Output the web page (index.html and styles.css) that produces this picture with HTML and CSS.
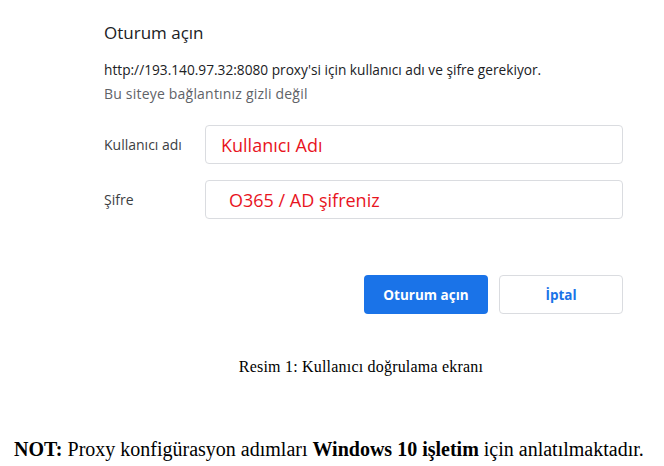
FILE: index.html
```html
<!DOCTYPE html>
<html lang="tr">

<head>
    <meta charset="UTF-8">
    <title>Oturum açın</title>
    <link rel="stylesheet" href="styles.css">
</head>

<body>
    <div class="dialog">
        <h1 class="title">Oturum açın</h1>
        <p class="msg">http://193.140.97.32:8080 proxy'si için kullanıcı adı ve şifre gerekiyor.</p>
        <p class="warn">Bu siteye bağlantınız gizli değil</p>

        <div class="row first">
            <label class="label">Kullanıcı adı</label>
            <div class="field"><span class="hint">Kullanıcı Adı</span></div>
        </div>
        <div class="row">
            <label class="label">Şifre</label>
            <div class="field"><span class="hint pass">O365 / AD şifreniz</span></div>
        </div>

        <div class="buttons">
            <a class="btn ok" href="javascript:void 0">Oturum açın</a>
            <a class="btn cancel" href="javascript:void 0">İptal</a>
        </div>
    </div>

    <p class="caption">Resim 1: Kullanıcı doğrulama ekranı</p>

    <p class="note"><b>NOT:</b> Proxy konfigürasyon adımları <b>Windows 10 işletim</b> için anlatılmaktadır.</p>
</body>

</html>
```

FILE: styles.css
```css
* {
    margin: 0;
    padding: 0;
}

body {
    background: #fff;
    font-family: "Open Sans", "Noto Sans", sans-serif;
}

.dialog {
    width: 519px;
    padding: 22px 0 0 104px;
}

.title {
    font-size: 17px;
    font-weight: normal;
    color: #202124;
    line-height: 22px;
}

.msg {
    margin-top: 17px;
    font-size: 13.7px;
    line-height: 18px;
    color: #202124;
}

.warn {
    margin-top: 6px;
    font-size: 14px;
    line-height: 18px;
    color: #5f6368;
    letter-spacing: 0.2px;
}

.row {
    display: flex;
    align-items: center;
    margin-top: 16px;
}

.row.first {
    margin-top: 22px;
}

.label {
    width: 101px;
    font-size: 14px;
    color: #3c4043;
}

.field {
    flex: 1;
    height: 37px;
    border: 1px solid #dadce0;
    border-radius: 4px;
    display: flex;
    align-items: center;
    padding-left: 15px;
}

.hint {
    font-size: 18px;
    color: #e8141e;
}

.hint.pass {
    padding-left: 8px;
}

.buttons {
    display: flex;
    justify-content: flex-end;
    gap: 11px;
    margin-top: 56px;
}

.btn {
    display: flex;
    align-items: center;
    justify-content: center;
    width: 124px;
    height: 39px;
    box-sizing: border-box;
    border-radius: 4px;
    font-size: 13.5px;
    font-weight: bold;
    text-decoration: none;
}

.btn.ok {
    background: #1a73e8;
    color: #fff;
}

.btn.cancel {
    border: 1px solid #dadce0;
    color: #1a73e8;
}

.caption {
    margin-top: 44px;
    padding-left: 58px;
    text-align: center;
    font-family: "Liberation Serif", serif;
    font-size: 16px;
    letter-spacing: 0.2px;
    color: #000;
}

.note {
    margin-top: 62px;
    padding-left: 14px;
    font-family: "Liberation Serif", serif;
    font-size: 20px;
    color: #000;
}
```
